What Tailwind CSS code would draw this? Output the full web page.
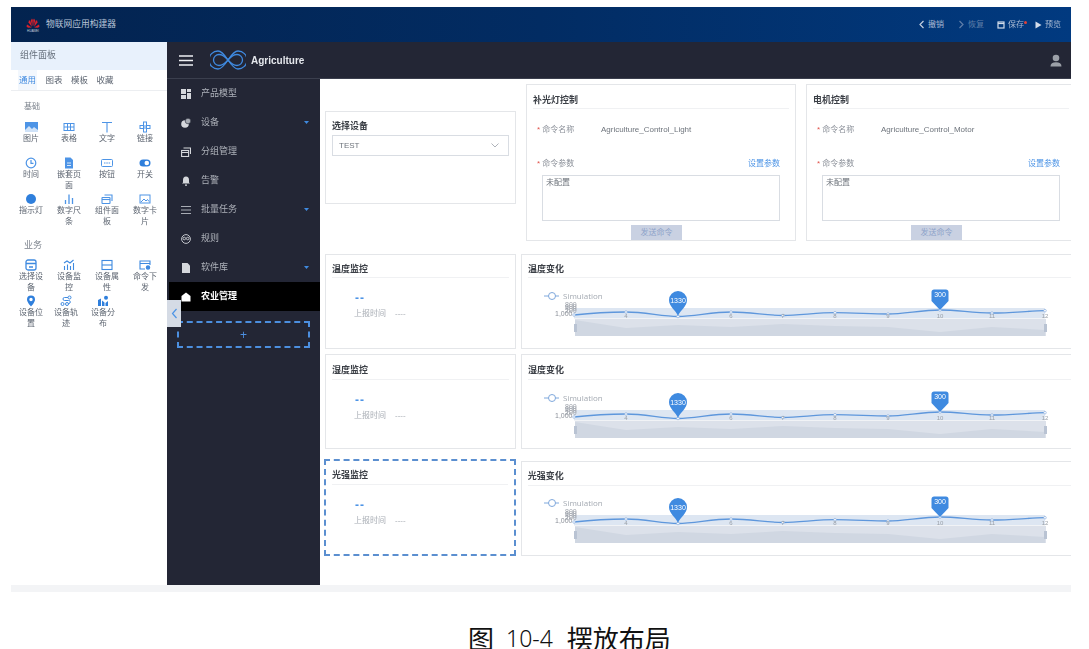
<!DOCTYPE html>
<html lang="zh-CN">
<head>
  <meta charset="UTF-8" />
  <title>物联网应用构建器</title>
  <script src="https://cdn.jsdelivr.net/npm/@tailwindcss/browser@4"></script>
</head>
<body class="bg-white h-[649px] overflow-hidden font-['Liberation_Sans','Noto_Sans_CJK_SC',sans-serif]">

  <div class="pt-[7px] pl-[11px] w-[1071px] blur-[0.5px]">
    <!-- header -->
    <header class="h-[35px] flex items-center bg-gradient-to-r from-[#03234f] via-[#022c63] to-[#013a80] text-[9px]">
      <svg class="ml-[14px] w-[16px] h-[16px]" viewBox="0 0 16 16">
        <g fill="#d8202c">
          <path d="M7.300 9.500L5.800 3.500 7 1.500 7.800 3z"/><path d="M8.700 9.500L10.200 3.500 9 1.500 8.200 3z"/>
          <path d="M7 10L3.500 5.500 4 3 5.500 4.500z"/><path d="M9 10L12.500 5.500 12 3 10.500 4.500z"/>
          <path d="M6.800 10.500L2 7.500 1.500 9.500 3 10.800z"/><path d="M9.200 10.500L14 7.500 14.500 9.500 13 10.800z"/>
        </g>
        <text x="8" y="14.500" font-size="3" fill="#c9d2df" text-anchor="middle">HUAWEI</text>
      </svg>
      <span class="ml-[5px] text-[#b9c5d8] text-[8.750px]">物联网应用构建器</span>
      <div class="ml-auto flex items-center text-[#a9bad3] text-[8px] pr-[10px]">
        <span class="flex items-center gap-[3px]">
          <svg class="w-[7px] h-[9px]" viewBox="0 0 7 9" fill="none" stroke="#c3cfe0" stroke-width="1.200"><path d="M5.500 1L2 4.500 5.500 8"/></svg>撤销
        </span>
        <span class="flex items-center gap-[3px] ml-[14px] text-[#5f7ea8]">
          <svg class="w-[7px] h-[9px]" viewBox="0 0 7 9" fill="none" stroke="#5f7ea8" stroke-width="1.200"><path d="M1.500 1L5 4.500 1.500 8"/></svg>恢复
        </span>
        <span class="relative flex items-center gap-[3px] ml-[13px]">
          <svg class="w-[8px] h-[8px]" viewBox="0 0 8 8" fill="none" stroke="#d3dcea" stroke-width="1.200"><rect x="1" y="1" width="6" height="6"/><path d="M1 2.500h6"/></svg>保存
          <i class="absolute -right-[3px] top-[2px] w-[3px] h-[3px] rounded-full bg-[#e0413a]"></i>
        </span>
        <span class="flex items-center gap-[3px] ml-[11px]">
          <svg class="w-[7px] h-[8px]" viewBox="0 0 7 8"><path d="M0.500 0.500L6.500 4 0.500 7.500z" fill="#d3dcea"/></svg>预览
        </span>
      </div>
    </header>

    <div class="flex h-[543px]">
      <!-- component palette -->
      <aside class="w-[156px] shrink-0 bg-white text-[8px] text-[#5c6470]">
        <div class="h-[28px] flex items-center pl-[9px] bg-[#e8f1fc] text-[9px] text-[#66707c]">组件面板</div>
        <div class="h-[21px] flex items-center pl-[7px] gap-[8.500px] text-[8.500px] border-b border-[#eceef1]">
          <span class="h-full flex items-center px-[1px] bg-[#f2f7fd] text-[#3f8ae0]">通用</span>
          <span>图表</span><span>模板</span><span>收藏</span>
        </div>
        <div class="pl-[13px] mt-[10px] mb-[8px] text-[#7b828c] leading-[12px]">基础</div>
        <div class="grid grid-cols-[38px_38px_38px_38px] auto-rows-[36px] ml-[1px]">
          <div class="flex flex-col items-center text-center leading-[11px]">
            <svg class="w-[13px] h-[12px]" viewBox="0 0 13 12"><rect y="1" width="13" height="10" fill="#4d94e6"/><path d="M0 9l4-4 3 3 2-2 4 3v2H0z" fill="#cfe2f8"/></svg><span class="w-[28px]">图片</span>
          </div>
          <div class="flex flex-col items-center text-center leading-[11px]">
            <svg class="w-[12px] h-[12px]" viewBox="0 0 12 12" fill="none" stroke="#4d94e6"><rect x="1" y="2.500" width="10" height="7"/><path d="M1 6h10M4.500 2.500v7M7.500 2.500v7"/></svg><span class="w-[28px]">表格</span>
          </div>
          <div class="flex flex-col items-center text-center leading-[11px]">
            <svg class="w-[12px] h-[12px]" viewBox="0 0 12 12" fill="none" stroke="#4d94e6" stroke-width="1.100"><path d="M1 1.500h10M6 1.500V11.500"/></svg><span class="w-[28px]">文字</span>
          </div>
          <div class="flex flex-col items-center text-center leading-[11px]">
            <svg class="w-[12px] h-[12px]" viewBox="0 0 12 12" fill="none" stroke="#4d94e6"><rect x="4.500" y="1" width="3" height="4"/><rect x="4.500" y="7" width="3" height="4"/><rect x="1" y="4.500" width="3.500" height="3"/><rect x="7.500" y="4.500" width="3.500" height="3"/></svg><span class="w-[28px]">链接</span>
          </div>

          <div class="flex flex-col items-center text-center leading-[11px]">
            <svg class="w-[12px] h-[12px]" viewBox="0 0 12 12" fill="none" stroke="#4d94e6" stroke-width="1.200"><circle cx="6" cy="6" r="4.800"/><path d="M6 3v3.300h2.500"/></svg><span class="w-[28px]">时间</span>
          </div>
          <div class="flex flex-col items-center text-center leading-[11px]">
            <svg class="w-[12px] h-[12px]" viewBox="0 0 12 12"><path d="M2 0.500h5.500L10 3v8.500H2z" fill="#4d94e6"/><path d="M4 6h4M4 8.500h4" stroke="#fff" stroke-width=".8"/></svg><span class="w-[28px]">嵌套页面</span>
          </div>
          <div class="flex flex-col items-center text-center leading-[11px]">
            <svg class="w-[12px] h-[12px]" viewBox="0 0 12 12" fill="none" stroke="#4d94e6"><rect x=".5" y="2.500" width="11" height="7" rx="1"/><path d="M3 6h1.500M5.300 6h1.500M7.600 6h1.500"/></svg><span class="w-[28px]">按钮</span>
          </div>
          <div class="flex flex-col items-center text-center leading-[11px]">
            <svg class="w-[12px] h-[12px]" viewBox="0 0 12 12"><rect x=".5" y="2.500" width="11" height="7" rx="3.500" fill="#2f7fdc"/><circle cx="7.800" cy="6" r="2.300" fill="#fff"/></svg><span class="w-[28px]">开关</span>
          </div>

          <div class="flex flex-col items-center text-center leading-[11px]">
            <svg class="w-[12px] h-[12px]" viewBox="0 0 12 12"><circle cx="6" cy="6" r="5" fill="#2f7fdc"/></svg><span class="w-[28px]">指示灯</span>
          </div>
          <div class="flex flex-col items-center text-center leading-[11px]">
            <svg class="w-[12px] h-[12px]" viewBox="0 0 12 12" fill="none" stroke="#4d94e6" stroke-width="1.300"><path d="M2.500 7v4M6 1.500V11M9.500 5v6"/></svg><span class="w-[28px]">数字尺条</span>
          </div>
          <div class="flex flex-col items-center text-center leading-[11px]">
            <svg class="w-[12px] h-[12px]" viewBox="0 0 12 12" fill="none" stroke="#4d94e6" stroke-width="1.100"><rect x="1" y="4.500" width="8" height="6" rx=".5"/><path d="M3.500 2h7.500v6"/><path d="M1 6.500h8"/></svg><span class="w-[28px]">组件面板</span>
          </div>
          <div class="flex flex-col items-center text-center leading-[11px]">
            <svg class="w-[12px] h-[12px]" viewBox="0 0 12 12" fill="none" stroke="#4d94e6"><rect x="1" y="2" width="10" height="8"/><path d="M2 9l3-3 2 2 1.500-1.500L10 8.500"/></svg><span class="w-[28px]">数字卡片</span>
          </div>
        </div>

        <div class="pl-[13px] mt-[10px] mb-[8px] text-[#7b828c] text-[9px] leading-[12px]">业务</div>
        <div class="grid grid-cols-[38px_38px_38px_38px] auto-rows-[36px] ml-[1px]">
          <div class="flex flex-col items-center text-center leading-[11px]">
            <svg class="w-[12px] h-[12px]" viewBox="0 0 12 12" fill="none" stroke="#3f8ae0" stroke-width="1.300"><rect x="1" y="1" width="10" height="10" rx="2"/><path d="M1 4.500h10M4 8h4"/></svg><span class="w-[28px]">选择设备</span>
          </div>
          <div class="flex flex-col items-center text-center leading-[11px]">
            <svg class="w-[12px] h-[12px]" viewBox="0 0 12 12" fill="none" stroke="#3f8ae0" stroke-width="1.100"><path d="M1.500 11V7M4.500 11V5.500M7.500 11V7M10.500 11V4M1 4l3-2 3 2 3.500-3"/></svg><span class="w-[28px]">设备监控</span>
          </div>
          <div class="flex flex-col items-center text-center leading-[11px]">
            <svg class="w-[12px] h-[12px]" viewBox="0 0 12 12" fill="none" stroke="#3f8ae0" stroke-width="1.100"><rect x="1" y="1.500" width="10" height="9"/><path d="M1 6h10"/></svg><span class="w-[28px]">设备属性</span>
          </div>
          <div class="flex flex-col items-center text-center leading-[11px]">
            <svg class="w-[12px] h-[12px]" viewBox="0 0 12 12" fill="none" stroke="#3f8ae0" stroke-width="1.100"><path d="M6 10H1V2h10v4M1 4.500h10"/><circle cx="9" cy="8.500" r="1.700" fill="#3f8ae0"/></svg><span class="w-[28px]">命令下发</span>
          </div>
          <div class="flex flex-col items-center text-center leading-[11px]">
            <svg class="w-[12px] h-[12px]" viewBox="0 0 12 12"><path fill-rule="evenodd" d="M6 .5a4 4 0 0 1 4 4c0 3-4 7-4 7s-4-4-4-7a4 4 0 0 1 4-4zm0 2.300a1.700 1.700 0 1 0 0 3.400 1.700 1.700 0 0 0 0-3.400z" fill="#2f7fdc"/></svg><span class="w-[28px]">设备位置</span>
          </div>
          <div class="flex flex-col items-center text-center leading-[11px] -ml-[6px]">
            <svg class="w-[12px] h-[12px]" viewBox="0 0 12 12" fill="none" stroke="#3f8ae0"><circle cx="2.500" cy="9" r="1.500"/><circle cx="9.500" cy="2.500" r="1.500"/><circle cx="7" cy="9" r="1.500"/><path d="M8 2.500H4.500a1.500 1.500 0 0 0 0 3h4a1.500 1.500 0 0 1 .5 3H8.500"/></svg><span class="w-[28px]">设备轨迹</span>
          </div>
          <div class="flex flex-col items-center text-center leading-[11px] -ml-[8px]">
            <svg class="w-[12px] h-[12px]" viewBox="0 0 12 12"><path d="M1 11V5l3-1.500V11zM5 11V5.500l2.500 2V11zM8.500 11V8l2.500-2v5z" fill="#2f7fdc"/><circle cx="9" cy="2.800" r="2" fill="#2f7fdc"/></svg><span class="w-[28px]">设备分布</span>
          </div>
        </div>
      </aside>

      <div class="relative flex-1 min-w-0 flex flex-col bg-[#232635]">
        <!-- top bar -->
        <div class="h-[37px] shrink-0 flex items-center pl-[12px] pr-[9px] border-b border-[#3b3f4e]">
          <svg class="w-[14px] h-[11px]" viewBox="0 0 14 11"><path d="M0 1h14M0 5.500h14M0 10h14" stroke="#eef0f3" stroke-width="1.400"/></svg>
          <svg class="ml-[17px] w-[36px] h-[20px]" viewBox="0 0 36 20" fill="none" stroke="#3f8ae0" stroke-width="1.300">
            <path d="M18 10C14 4 11 1 8 1a9 9 0 0 0 0 18c3 0 6-3 10-9s7-9 10-9a9 9 0 0 1 0 18c-3 0-6-3-10-9z"/>
            <path d="M18 10C15 6.500 12 4.500 9 4.500a5.500 5.500 0 0 0 0 11c3 0 6-2 9-5.500s6-5.500 9-5.500a5.500 5.500 0 0 1 0 11c-3 0-6-2-9-5.500z"/>
          </svg>
          <span class="ml-[5px] text-[10px] font-bold text-[#e4e7ec]">Agriculture</span>
          <svg class="ml-auto w-[12px] h-[13px]" viewBox="0 0 12 13"><circle cx="6" cy="4" r="3.300" fill="#9ba0a8"/><path d="M0.500 12.500c0-3 2-4.300 5.500-4.300s5.500 1.300 5.500 4.300z" fill="#9ba0a8"/></svg>
        </div>

        <div class="flex flex-1 min-h-0">
          <!-- sidebar -->
          <nav class="w-[153px] shrink-0 text-[9px] text-[#aeb2ba]">
            <div class="h-[29px] flex items-center pl-[14px] gap-[10px]">
              <svg class="w-[10px] h-[10px]" viewBox="0 0 10 10"><path d="M0 0h5v5H0zM6 0h4v3H6zM6 4h4v6H6zM0 6h5v4H0z" fill="#d5d7dc"/></svg>产品模型
            </div>
            <div class="h-[29px] flex items-center pl-[14px] gap-[10px] pr-[11px]">
              <svg class="w-[10px] h-[10px]" viewBox="0 0 10 10"><circle cx="4" cy="6" r="3.800" fill="#d5d7dc"/><circle cx="7" cy="3" r="2.800" fill="#a8acb4" stroke="#232635" stroke-width=".6"/></svg>设备
              <svg class="ml-auto w-[5px] h-[3px]" viewBox="0 0 5 3"><path d="M0 0h5L2.500 3z" fill="#3f8ae0"/></svg>
            </div>
            <div class="h-[29px] flex items-center pl-[14px] gap-[10px]">
              <svg class="w-[10px] h-[10px]" viewBox="0 0 10 10" fill="none" stroke="#d5d7dc" stroke-width="1.100"><rect x=".6" y="3.500" width="7" height="6"/><path d="M2.500 1h7v6M.6 5.500h7"/></svg>分组管理
            </div>
            <div class="h-[29px] flex items-center pl-[14px] gap-[10px]">
              <svg class="w-[10px] h-[10px]" viewBox="0 0 10 10"><path d="M5 .5c2 0 3 1.500 3 3.500v2.500l1 1H1l1-1V4c0-2 1-3.500 3-3.500zM4 8.500h2v1.200H4z" fill="#d5d7dc"/></svg>告警
            </div>
            <div class="h-[29px] flex items-center pl-[14px] gap-[10px] pr-[11px]">
              <svg class="w-[10px] h-[10px]" viewBox="0 0 10 10"><path d="M0 1.500h10M0 5h10M0 8.500h10" stroke="#a8acb4"/></svg>批量任务
              <svg class="ml-auto w-[5px] h-[3px]" viewBox="0 0 5 3"><path d="M0 0h5L2.500 3z" fill="#3f8ae0"/></svg>
            </div>
            <div class="h-[29px] flex items-center pl-[14px] gap-[10px]">
              <svg class="w-[10px] h-[10px]" viewBox="0 0 10 10" fill="none" stroke="#c3c6cc"><circle cx="5" cy="5" r="4.400"/><circle cx="3.300" cy="4.500" r="1.300"/><circle cx="6.700" cy="4.500" r="1.300"/></svg>规则
            </div>
            <div class="h-[29px] flex items-center pl-[14px] gap-[10px] pr-[11px]">
              <svg class="w-[10px] h-[10px]" viewBox="0 0 10 10"><path d="M1 0h5.500L9 2.500V10H1z" fill="#d5d7dc"/></svg>软件库
              <svg class="ml-auto w-[5px] h-[3px]" viewBox="0 0 5 3"><path d="M0 0h5L2.500 3z" fill="#3f8ae0"/></svg>
            </div>
            <div class="h-[29px] flex items-center pl-[12px] ml-[2px] gap-[10px] bg-black text-white font-bold">
              <svg class="w-[10px] h-[10px]" viewBox="0 0 10 10"><path d="M5 0.500L9.500 4v5.500H.5V4z" fill="#fff"/></svg>农业管理
            </div>
            <div class="mx-[10px] mt-[10px] h-[27px] flex items-center justify-center border-2 border-dashed border-[#4c8fe0] text-[#4c8fe0] text-[12px]">+</div>
          </nav>

          <!-- canvas -->
          <main class="flex-1 min-w-0 bg-white overflow-hidden pl-[5px] pt-[5px] text-[#8b9099] text-[8px]">
            <div class="flex items-start h-[170px] w-[760px]">
              <section class="mt-[27px] w-[191px] h-[93px] border border-[#e4e6e9] px-[6px]">
                <h3 class="mt-[8px] text-[9px] font-bold leading-[12px] text-[#3b3f46]">选择设备</h3>
                <div class="mt-[3px] h-[21px] flex items-center justify-between px-[6px] border border-[#d9dde3] text-[#6e747c]">
                  TEST
                  <svg class="w-[8px] h-[5px] mr-[3px]" viewBox="0 0 8 5" fill="none" stroke="#9aa0a8" stroke-width=".8"><path d="M.5.500L4 4 7.500.500"/></svg>
                </div>
              </section>

              <section class="ml-[10px] w-[270px] h-[157px] border border-[#e4e6e9] px-[6px] relative">
                <h3 class="h-[24px] flex items-end pb-[1px] text-[9px] font-bold text-[#3b3f46] border-b border-[#f0f1f3]">补光灯控制</h3>
                <div class="mt-[15px] pl-[4px] flex leading-[12px]">
                  <span class="w-[64px]"><i class="text-[#e0554e] not-italic">*</i> 命令名称</span>
                  <span class="text-[#6e747c]">Agriculture_Control_Light</span>
                </div>
                <div class="mt-[22px] pl-[4px] pr-[9px] flex justify-between leading-[12px]">
                  <span><i class="text-[#e0554e] not-italic">*</i> 命令参数</span>
                  <span class="text-[#4d94e6]">设置参数</span>
                </div>
                <div class="mt-[5px] ml-[9px] mr-[9px] h-[46px] border border-[#d9dde3] px-[3px] py-[1px] leading-[12px] text-[#6e747c]">未配置</div>
                <div class="absolute left-[104px] bottom-0 w-[51px] h-[15px] flex items-center justify-center bg-[#c9d1e2] text-[#8ea3c9]">发送命令</div>
              </section>

              <section class="ml-[10px] w-[270px] h-[157px] border border-[#e4e6e9] px-[6px] relative">
                <h3 class="h-[24px] flex items-end pb-[1px] text-[9px] font-bold text-[#3b3f46] border-b border-[#f0f1f3]">电机控制</h3>
                <div class="mt-[15px] pl-[4px] flex leading-[12px]">
                  <span class="w-[64px]"><i class="text-[#e0554e] not-italic">*</i> 命令名称</span>
                  <span class="text-[#6e747c]">Agriculture_Control_Motor</span>
                </div>
                <div class="mt-[22px] pl-[4px] pr-[9px] flex justify-between leading-[12px]">
                  <span><i class="text-[#e0554e] not-italic">*</i> 命令参数</span>
                  <span class="text-[#4d94e6]">设置参数</span>
                </div>
                <div class="mt-[5px] ml-[9px] mr-[9px] h-[46px] border border-[#d9dde3] px-[3px] py-[1px] leading-[12px] text-[#6e747c]">未配置</div>
                <div class="absolute left-[104px] bottom-0 w-[51px] h-[15px] flex items-center justify-center bg-[#c9d1e2] text-[#8ea3c9]">发送命令</div>
              </section>
            </div>

            <!-- temperature -->
            <div class="flex gap-[5px] w-[760px] h-[95px]">
              <section class="w-[191px] border border-[#e4e6e9] px-[6px]">
                <h3 class="h-[23px] flex items-end pb-[1px] text-[9px] font-bold text-[#3b3f46] border-b border-[#f0f1f3]">温度监控</h3>
                <div class="mt-[14px] ml-[23px] text-[#4d94e6] text-[12px] tracking-[1px] leading-[12px] font-bold">--</div>
                <div class="mt-[4px] ml-[22px] flex gap-[9px] leading-[12px] text-[#a8adb4]"><span>上报时间</span><span>----</span></div>
              </section>
              <section class="w-[564px] border border-[#e4e6e9] px-[6px] relative">
                <h3 class="h-[23px] flex items-end pb-[1px] text-[9px] font-bold text-[#3b3f46] border-b border-[#f0f1f3]">温度变化</h3>
                <svg class="absolute left-0 -top-[1px]" width="550" height="94" viewBox="0 0 550 94">
                  <path d="M22 42h15" stroke="#7fa8dc"/><circle cx="30" cy="42" r="3.500" fill="#fff" stroke="#7fa8dc"/>
                  <text x="41" y="45" font-size="8" fill="#a4aab2" font-family="Open Sans">Simulation</text>
                  <rect x="52" y="54" width="471" height="10" fill="#dde6f2"/>
                  <rect x="52" y="64" width="471" height="1" fill="#f1f3f6"/>
                  <rect x="53" y="65" width="471" height="17" fill="#dce1ea"/>
                  <path d="M53 82V66L104 74 156 71 209 73 261 70 313 72 366 73 418 78 470 73 523 76V82z" fill="#d0d7e2"/>
                  <g font-size="7" fill="#a0a5ad"><text x="43" y="53">800</text><text x="43" y="55">600</text><text x="43" y="57">400</text><text x="43" y="59">200</text></g>
                  <text x="33" y="62" font-size="7" fill="#8b9099">1,000</text>
                  <path d="M52 61C70 59 85 58 104 58S140 62.500 156 62.500 190 58 209 58 245 61.500 261 61.500 295 58.700 313 58.700 350 60 366 60 400 56 418 56 450 59 470 59 505 57 523 56.700" fill="none" stroke="#5e97dc" stroke-width="1.300"/>
                  <g fill="#fff" stroke="#8fb2e0" stroke-width=".7"><circle cx="52" cy="61" r="1.300"/><circle cx="104" cy="58" r="1.300"/><circle cx="156" cy="62.500" r="1.300"/><circle cx="209" cy="58" r="1.300"/><circle cx="261" cy="61.500" r="1.300"/><circle cx="313" cy="58.700" r="1.300"/><circle cx="366" cy="60" r="1.300"/><circle cx="418" cy="56" r="1.300"/><circle cx="470" cy="59" r="1.300"/><circle cx="523" cy="56.700" r="1.300"/></g>
                  <g font-size="6" fill="#9aa0a8" text-anchor="middle"><text x="104" y="64">4</text><text x="209" y="64">6</text><text x="261" y="64">7</text><text x="313" y="64">8</text><text x="366" y="64">9</text><text x="418" y="64">10</text><text x="470" y="64">11</text><text x="523" y="64">12</text></g>
                  <path d="M156 62c-2-6-9-9-9-16a9 9 0 0 1 18 0c0 7-7 10-9 16z" fill="#3f8ae0"/>
                  <text x="156" y="49" font-size="7" fill="#fff" text-anchor="middle">1330</text>
                  <path d="M418 56l-8.500-9v-9c0-1.500 1-2.500 2.500-2.500h12c1.500 0 2.500 1 2.500 2.500v9z" fill="#3f8ae0" />
                  <text x="418" y="43" font-size="7" fill="#fff" text-anchor="middle">300</text>
                  <rect x="52" y="70" width="3" height="8" fill="#b9c3d3"/><rect x="522" y="70" width="3" height="8" fill="#b9c3d3"/>
                </svg>
              </section>
            </div>

            <!-- humidity -->
            <div class="flex gap-[5px] w-[760px] h-[95px] mt-[5px]">
              <section class="w-[191px] border border-[#e4e6e9] px-[6px]">
                <h3 class="h-[25px] flex items-end pb-[2px] text-[9px] font-bold text-[#3b3f46] border-b border-[#f0f1f3]">湿度监控</h3>
                <div class="mt-[14px] ml-[23px] text-[#4d94e6] text-[12px] tracking-[1px] leading-[12px] font-bold">--</div>
                <div class="mt-[4px] ml-[22px] flex gap-[9px] leading-[12px] text-[#a8adb4]"><span>上报时间</span><span>----</span></div>
              </section>
              <section class="w-[564px] border border-[#e4e6e9] px-[6px] relative">
                <h3 class="h-[25px] flex items-end pb-[2px] text-[9px] font-bold text-[#3b3f46] border-b border-[#f0f1f3]">湿度变化</h3>
                <svg class="absolute left-0 top-[1px]" width="550" height="92" viewBox="0 0 550 92">
                  <path d="M22 42h15" stroke="#7fa8dc"/><circle cx="30" cy="42" r="3.500" fill="#fff" stroke="#7fa8dc"/>
                  <text x="41" y="45" font-size="8" fill="#a4aab2" font-family="Open Sans">Simulation</text>
                  <rect x="52" y="54" width="471" height="10" fill="#dde6f2"/>
                  <rect x="52" y="64" width="471" height="1" fill="#f1f3f6"/>
                  <rect x="53" y="65" width="471" height="17" fill="#dce1ea"/>
                  <path d="M53 82V66L104 74 156 71 209 73 261 70 313 72 366 73 418 78 470 73 523 76V82z" fill="#d0d7e2"/>
                  <g font-size="7" fill="#a0a5ad"><text x="43" y="53">800</text><text x="43" y="55">600</text><text x="43" y="57">400</text><text x="43" y="59">200</text></g>
                  <text x="33" y="62" font-size="7" fill="#8b9099">1,000</text>
                  <path d="M52 61C70 59 85 58 104 58S140 62.500 156 62.500 190 58 209 58 245 61.500 261 61.500 295 58.700 313 58.700 350 60 366 60 400 56 418 56 450 59 470 59 505 57 523 56.700" fill="none" stroke="#5e97dc" stroke-width="1.300"/>
                  <g fill="#fff" stroke="#8fb2e0" stroke-width=".7"><circle cx="52" cy="61" r="1.300"/><circle cx="104" cy="58" r="1.300"/><circle cx="156" cy="62.500" r="1.300"/><circle cx="209" cy="58" r="1.300"/><circle cx="261" cy="61.500" r="1.300"/><circle cx="313" cy="58.700" r="1.300"/><circle cx="366" cy="60" r="1.300"/><circle cx="418" cy="56" r="1.300"/><circle cx="470" cy="59" r="1.300"/><circle cx="523" cy="56.700" r="1.300"/></g>
                  <g font-size="6" fill="#9aa0a8" text-anchor="middle"><text x="104" y="64">4</text><text x="209" y="64">6</text><text x="261" y="64">7</text><text x="313" y="64">8</text><text x="366" y="64">9</text><text x="418" y="64">10</text><text x="470" y="64">11</text><text x="523" y="64">12</text></g>
                  <path d="M156 62c-2-6-9-9-9-16a9 9 0 0 1 18 0c0 7-7 10-9 16z" fill="#3f8ae0"/>
                  <text x="156" y="49" font-size="7" fill="#fff" text-anchor="middle">1330</text>
                  <path d="M418 56l-8.500-9v-9c0-1.500 1-2.500 2.500-2.500h12c1.500 0 2.500 1 2.500 2.500v9z" fill="#3f8ae0" />
                  <text x="418" y="43" font-size="7" fill="#fff" text-anchor="middle">300</text>
                  <rect x="52" y="70" width="3" height="8" fill="#b9c3d3"/><rect x="522" y="70" width="3" height="8" fill="#b9c3d3"/>
                </svg>
              </section>
            </div>

            <!-- light -->
            <div class="flex gap-[5px] w-[760px] mt-[10px] -ml-[1px] items-start">
              <section class="w-[192px] h-[97px] border-2 border-dashed border-[#5b8fd0] px-[6px]">
                <h3 class="h-[24px] flex items-end pb-[2px] text-[9px] font-bold text-[#3b3f46] border-b border-[#f0f1f3]">光强监控</h3>
                <div class="mt-[14px] ml-[23px] text-[#4d94e6] text-[12px] tracking-[1px] leading-[12px] font-bold">--</div>
                <div class="mt-[4px] ml-[22px] flex gap-[9px] leading-[12px] text-[#a8adb4]"><span>上报时间</span><span>----</span></div>
              </section>
              <section class="w-[564px] h-[95px] mt-[2px] border border-[#e4e6e9] px-[6px] relative">
                <h3 class="h-[24px] flex items-end pb-[2px] text-[9px] font-bold text-[#3b3f46] border-b border-[#f0f1f3]">光强变化</h3>
                <svg class="absolute left-0 -top-[1px]" width="550" height="94" viewBox="0 0 550 94">
                  <path d="M22 42h15" stroke="#7fa8dc"/><circle cx="30" cy="42" r="3.500" fill="#fff" stroke="#7fa8dc"/>
                  <text x="41" y="45" font-size="8" fill="#a4aab2" font-family="Open Sans">Simulation</text>
                  <rect x="52" y="54" width="471" height="10" fill="#dde6f2"/>
                  <rect x="52" y="64" width="471" height="1" fill="#f1f3f6"/>
                  <rect x="53" y="65" width="471" height="17" fill="#dce1ea"/>
                  <path d="M53 82V66L104 74 156 71 209 73 261 70 313 72 366 73 418 78 470 73 523 76V82z" fill="#d0d7e2"/>
                  <g font-size="7" fill="#a0a5ad"><text x="43" y="53">800</text><text x="43" y="55">600</text><text x="43" y="57">400</text><text x="43" y="59">200</text></g>
                  <text x="33" y="62" font-size="7" fill="#8b9099">1,000</text>
                  <path d="M52 61C70 59 85 58 104 58S140 62.500 156 62.500 190 58 209 58 245 61.500 261 61.500 295 58.700 313 58.700 350 60 366 60 400 56 418 56 450 59 470 59 505 57 523 56.700" fill="none" stroke="#5e97dc" stroke-width="1.300"/>
                  <g fill="#fff" stroke="#8fb2e0" stroke-width=".7"><circle cx="52" cy="61" r="1.300"/><circle cx="104" cy="58" r="1.300"/><circle cx="156" cy="62.500" r="1.300"/><circle cx="209" cy="58" r="1.300"/><circle cx="261" cy="61.500" r="1.300"/><circle cx="313" cy="58.700" r="1.300"/><circle cx="366" cy="60" r="1.300"/><circle cx="418" cy="56" r="1.300"/><circle cx="470" cy="59" r="1.300"/><circle cx="523" cy="56.700" r="1.300"/></g>
                  <g font-size="6" fill="#9aa0a8" text-anchor="middle"><text x="104" y="64">4</text><text x="209" y="64">6</text><text x="261" y="64">7</text><text x="313" y="64">8</text><text x="366" y="64">9</text><text x="418" y="64">10</text><text x="470" y="64">11</text><text x="523" y="64">12</text></g>
                  <path d="M156 62c-2-6-9-9-9-16a9 9 0 0 1 18 0c0 7-7 10-9 16z" fill="#3f8ae0"/>
                  <text x="156" y="49" font-size="7" fill="#fff" text-anchor="middle">1330</text>
                  <path d="M418 56l-8.500-9v-9c0-1.500 1-2.500 2.500-2.500h12c1.500 0 2.500 1 2.500 2.500v9z" fill="#3f8ae0" />
                  <text x="418" y="43" font-size="7" fill="#fff" text-anchor="middle">300</text>
                  <rect x="52" y="70" width="3" height="8" fill="#b9c3d3"/><rect x="522" y="70" width="3" height="8" fill="#b9c3d3"/>
                </svg>
              </section>
            </div>
          </main>
        </div>

        <!-- collapse handle -->
        <div class="absolute left-0 top-[258px] w-[14px] h-[27px] flex items-center justify-center bg-[#d5dbe5]">
          <svg class="w-[7px] h-[11px]" viewBox="0 0 7 11" fill="none" stroke="#4d94e6" stroke-width="1.200"><path d="M5.500 1L1.500 5.500 5.500 10"/></svg>
        </div>
      </div>
    </div>
    <div class="h-[7px] bg-[#f3f4f6]"></div>
  </div>

  <p class="mt-[32px] pl-[468px] h-[28px] flex items-center text-[26px] leading-[28px] text-[#111] whitespace-pre font-['Noto_Sans_CJK_SC',sans-serif]"><span>图</span><span class="ml-[12px] text-[23px] font-['Noto_Sans',sans-serif] font-light">10-4</span><span class="ml-[14px]">摆放布局</span></p>
</body>
</html>
